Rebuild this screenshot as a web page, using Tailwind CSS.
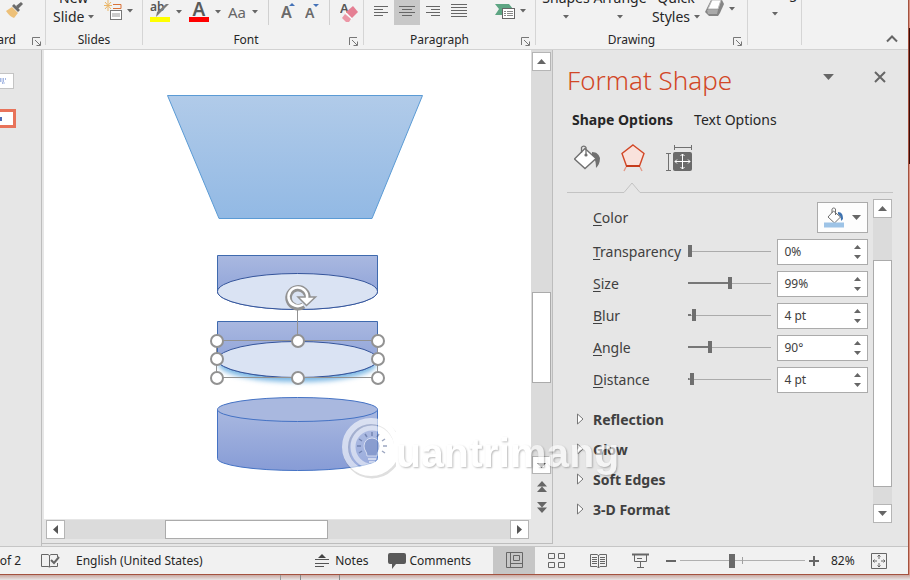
<!DOCTYPE html>
<html lang="en">
<head>
<meta charset="utf-8">
<title>Format Shape</title>
<script src="https://cdn.jsdelivr.net/npm/@tailwindcss/browser@4"></script>
</head>
<body class="font-['Noto_Sans',sans-serif] text-xs text-[#262626]">
<svg class="hidden" aria-hidden="true">
  <defs>
    <symbol id="down" viewBox="0 0 6 4"><path d="M0 0h6L3 3.5z" fill="#666"/></symbol>
    <symbol id="launch" viewBox="0 0 9 9"><path d="M.5 8V.5H8M3 3l5 5M8.500 4.500v4h-4" fill="none" stroke="#777"/></symbol>
    <symbol id="tri-up" viewBox="0 0 9 5"><path d="M0 5h9L4.500 0z" fill="#666"/></symbol>
    <symbol id="tri-down" viewBox="0 0 9 5"><path d="M0 0h9L4.500 5z" fill="#666"/></symbol>
    <symbol id="expand" viewBox="0 0 7 12"><path d="M.5 1v10L6 6z" fill="#fff" stroke="#777"/></symbol>
  </defs>
</svg>
<div class="relative flex h-screen flex-col overflow-hidden bg-[#e4e2e3]">
<div class="flex min-h-0 flex-1 bg-[linear-gradient(#d89080_0_28px,#3d0c08_28px_164px,#dd9484_164px)]">
<div class="flex min-w-0 flex-1 flex-col border-r border-b border-[#a4523f] bg-[#e6e6e6]">

  <!-- Ribbon -->
  <header class="flex h-[50px] shrink-0 border-b border-[#d2d2d2] bg-[#f2f2f2]">
    <section class="flex w-[46px] shrink-0 flex-col">
      <div class="flex h-[29px] overflow-hidden border-r border-[#d5d5d5] pl-1.5">
        <button aria-label="Format Painter" class="self-start"><svg width="18" height="19" viewBox="0 0 18 19"><path d="M0 11l6-4 6 6-4 5c-3-1-5-3-8-7z" fill="#edc078"/><path d="M6 6l2-2 6 6-2 2z" fill="#6b6b6b"/><path d="M10 6l5-4 2 2-5 5z" fill="#6b6b6b"/></svg></button>
      </div>
      <div class="flex h-4 items-center justify-between border-r border-[#d5d5d5] pr-1 pt-1.5"><span class="w-4 overflow-hidden"><span class="float-right">Clipboard</span></span><button aria-label="Clipboard settings" class="mt-0.5"><svg width="9" height="9"><use href="#launch"/></svg></button></div>
    </section>
    <section class="flex w-[97px] shrink-0 flex-col">
      <div class="flex h-[29px] items-end overflow-hidden border-r border-[#d5d5d5] pb-[3px] pl-[7px] text-sm leading-[19px]">
        <button class="w-[51px] text-left"><span class="block pl-1.5">New</span><span class="flex items-center gap-1">Slide <svg width="6" height="4"><use href="#down"/></svg></span></button>
        <button aria-label="Layout" class="flex items-center gap-1 self-start"><svg width="19" height="22" viewBox="0 0 19 22"><path d="M4 0v11M0 5.500h8M1 2l6 7M7 2l-6 7" stroke="#eab667" /><path d="M9 4.500h8v4H9" fill="none" stroke="#d9733a"/><rect x="6.500" y="10.500" width="11" height="9" fill="#fff" stroke="#777"/><path d="M8 13h8v4H8z" fill="#ccc"/></svg><svg width="6" height="4"><use href="#down"/></svg></button>
      </div>
      <div class="flex h-4 items-center justify-center border-r border-[#d5d5d5] pt-1.5">Slides</div>
    </section>
    <section class="flex w-[221px] shrink-0 flex-col">
      <div class="flex h-[29px] items-start overflow-hidden border-r border-[#d5d5d5] pl-[7px]">
        <button aria-label="Text Highlight Color" class="flex w-[39px] items-center gap-1.5"><svg width="20" height="24" viewBox="0 0 20 24"><text x="0" y="11" font-size="12" font-weight="600" fill="#555">ab</text><path d="M19 4l-9 9-4 4 1-5 9-8z" fill="#7b7b7b"/><path d="M0 17h20v5H0z" fill="#ff0"/></svg><svg width="6" height="4"><use href="#down"/></svg></button>
        <button aria-label="Font Color" class="flex w-[39px] items-center gap-1.5"><svg width="20" height="24" viewBox="0 0 20 24"><text x="10" y="16" text-anchor="middle" font-size="19" font-weight="600" fill="#5a5a5a">A</text><path d="M0 17h20v5H0z" fill="#f00"/></svg><svg width="6" height="4"><use href="#down"/></svg></button>
        <button class="flex h-6 w-10 items-center gap-1 text-[15px] text-[#666]">Aa <svg class="ml-0.5" width="6" height="4"><use href="#down"/></svg></button>
        <div class="mr-3 h-[25px] w-px bg-[#d0d0d0]"></div>
        <button aria-label="Increase Font Size" class="w-6"><svg width="16" height="22" viewBox="0 0 16 22"><text x="0" y="18" font-size="16" font-weight="600" fill="#6a6a6a">A</text><path d="M8 6h6l-3-3z" fill="#4472b8"/></svg></button>
        <button aria-label="Decrease Font Size" class="w-6"><svg width="16" height="22" viewBox="0 0 16 22"><text x="0" y="18" font-size="14" font-weight="600" fill="#6a6a6a">A</text><path d="M8 4h6l-3 3z" fill="#4472b8"/></svg></button>
        <div class="mr-2.5 h-[25px] w-px bg-[#d0d0d0]"></div>
        <button aria-label="Clear Formatting"><svg width="19" height="23" viewBox="0 0 19 23"><text x="0" y="13" font-size="13" font-weight="600" fill="#555">A</text><path d="M13 6l5 6-6 6-6-6z" fill="#e57f93"/><path d="M5 14l6 5-2 3H6l-4-4z" fill="#ec97a6"/><path d="M5 12l7 7" stroke="#fff"/></svg></button>
      </div>
      <div class="flex h-4 items-center border-r border-[#d5d5d5] pr-[5px] pt-1.5"><span class="flex-1 text-center">Font</span><button aria-label="Font settings" class="mt-0.5"><svg width="9" height="9"><use href="#launch"/></svg></button></div>
    </section>
    <section class="flex w-[172px] shrink-0 flex-col">
      <div class="flex h-[29px] items-start overflow-hidden border-r border-[#d5d5d5] pl-1">
        <button aria-label="Align Left" class="flex w-[26px] justify-center"><svg width="16" height="25"><path d="M1 6.500h14M1 9.500h9M1 12.500h14M1 15.500h9" stroke="#666"/></svg></button>
        <button aria-label="Center" class="flex w-[26px] justify-center bg-[#c8c8c8]"><svg width="16" height="25"><path d="M0 6.500h16M3 9.500h10M0 12.500h16M3 15.500h10" stroke="#666"/></svg></button>
        <button aria-label="Align Right" class="flex w-[26px] justify-center"><svg width="16" height="25"><path d="M1 6.500h14M6 9.500h9M1 12.500h14M6 15.500h9" stroke="#666"/></svg></button>
        <button aria-label="Justify" class="flex w-[26px] justify-center"><svg width="16" height="25"><path d="M0 4.500h16M0 7.500h16M0 10.500h16M0 13.500h16M0 16.500h16" stroke="#666"/></svg></button>
        <button aria-label="Convert to SmartArt" class="ml-[23px] flex items-center gap-1"><svg width="21" height="22" viewBox="0 0 21 22"><path d="M0 4h14l4 5h-11v6H0l4-6z" fill="#5da583"/><rect x="7.500" y="8.500" width="12" height="10" fill="#fff" stroke="#666"/><path d="M9 11.500h2M12 11.500h6M9 13.500h2M12 13.500h6M9 15.500h2M12 15.500h6" stroke="#888"/></svg><svg width="6" height="4"><use href="#down"/></svg></button>
      </div>
      <div class="flex h-4 items-center border-r border-[#d5d5d5] pr-[5px] pt-1.5"><span class="flex-1 pr-1.5 text-center">Paragraph</span><button aria-label="Paragraph settings" class="mt-0.5"><svg width="9" height="9"><use href="#launch"/></svg></button></div>
    </section>
    <section class="flex w-[212px] shrink-0 flex-col">
      <div class="flex h-[29px] items-end overflow-hidden border-r border-[#d5d5d5] pb-[3px] pl-1 text-sm leading-[19px]">
        <button class="flex w-[52px] flex-col items-center"><span>Shapes</span><span class="flex h-[19px] items-center"><svg width="6" height="4"><use href="#down"/></svg></span></button>
        <button class="flex w-[56px] flex-col items-center"><span>Arrange</span><span class="flex h-[19px] items-center"><svg width="6" height="4"><use href="#down"/></svg></span></button>
        <button class="ml-[3px] flex w-[50px] flex-col items-center"><span>Quick</span><span class="flex items-center gap-1">Styles <svg width="6" height="4"><use href="#down"/></svg></span></button>
        <button aria-label="Shape Effects" class="ml-1 flex items-center gap-1 self-start"><svg width="20" height="17" viewBox="0 0 20 17"><path d="M6 0h11l2 4-4 9-2 3H4l-4-4z" fill="#858585"/><path d="M7 0h9l-3 9H3z" fill="#fff" stroke="#bbb"/><path d="M2 10h11l-1 4H3z" fill="#aaa"/></svg><svg width="6" height="4"><use href="#down"/></svg></button>
      </div>
      <div class="flex h-4 items-center border-r border-[#d5d5d5] pr-[5px] pt-1.5"><span class="flex-1 pr-1.5 text-center">Drawing</span><button aria-label="Drawing settings" class="mt-0.5"><svg width="9" height="9"><use href="#launch"/></svg></button></div>
    </section>
    <section class="flex w-[54px] shrink-0 flex-col">
      <div class="flex h-[29px] items-end justify-center overflow-hidden border-r border-[#d5d5d5] pb-[3px] text-sm leading-[19px]">
        <button class="flex flex-col items-center"><span>Editing</span><span class="flex h-6 items-start pt-2.5"><svg width="6" height="4"><use href="#down"/></svg></span></button>
      </div>
      <div class="h-4 border-r border-[#d5d5d5]"></div>
    </section>
    <div class="flex flex-1 items-end justify-end pr-2.5 pb-1.5"><button aria-label="Collapse the Ribbon"><svg width="12" height="9" viewBox="0 0 12 9"><path d="M1 7.500l5-5 5 5" fill="none" stroke="#666" stroke-width="2"/></svg></button></div>
  </header>

  <main class="flex min-h-0 flex-1">
    <!-- Slide thumbnails -->
    <nav class="flex w-[42px] shrink-0 flex-col items-start gap-5 border-r border-[#bdbdbd] pt-[23px]" aria-label="Slides">
      <button aria-label="Slide 1" class="h-4 w-3.5 border border-l-0 border-[#c4c4c4] bg-white"><svg width="9" height="10"><path d="M0 3h6M0 5h4M2 7h3" stroke="#8ba2da" stroke-width="1.500" stroke-dasharray="1.500 1"/></svg></button>
      <button aria-label="Slide 2" class="h-[19px] w-4 border-3 border-l-0 border-[#e8735a] bg-white"><svg width="4" height="8"><path d="M0 2h2v4H0z" fill="#4d6bb5"/></svg></button>
    </nav>

    <div class="mb-0.5 flex min-w-0 flex-1 flex-col border-r border-b border-[#bdbdbd] pl-0.5">
      <div class="flex min-h-0 flex-1">
        <!-- Slide canvas -->
        <div class="relative min-w-0 flex-1 bg-white">
          <svg class="block h-full w-full" viewBox="44 50 487 469" role="img" aria-label="Slide with a trapezoid and three cylinders">
            <defs>
              <linearGradient id="g1" x2="0" y2="1"><stop stop-color="#b1cbe9"/><stop offset="1" stop-color="#92b9e4"/></linearGradient>
              <linearGradient id="g2" x2="0" y2="1"><stop stop-color="#a9b8e0"/><stop offset="1" stop-color="#879cd6"/></linearGradient>
              <filter id="soft" x="-20%" y="-50%" width="140%" height="200%"><feGaussianBlur stdDeviation="2.500"/></filter>
            </defs>
            <path d="M167.500 95.500h255l-50.500 123h-153z" fill="url(#g1)" stroke="#5b9bd5"/>
            <path d="M217.500 255.500h160v36a80 18 0 0 1-160 0z" fill="url(#g2)" stroke="#3f6aae"/>
            <ellipse cx="297.500" cy="291.500" rx="80" ry="18" fill="#dae3f3" stroke="#34549b"/>
            <ellipse cx="297.500" cy="364" rx="79" ry="18" fill="#7db8e4" filter="url(#soft)"/>
            <path d="M217.500 321.500h160v38a80 18 0 0 1-160 0z" fill="url(#g2)" stroke="#3f6aae"/>
            <ellipse cx="297.500" cy="359.500" rx="80" ry="18" fill="#dae3f3" stroke="#34549b"/>
            <path d="M217.500 409.500v49a80 12 0 0 0 160 0v-49" fill="url(#g2)" stroke="#4472c4"/>
            <ellipse cx="297.500" cy="409.500" rx="80" ry="12" fill="#a9b8df" stroke="#4472c4"/>
            <path d="M297.500 310v30M216.500 340.500h161v37h-161z" fill="none" stroke="#929292"/>
            <g fill="#fff" stroke="#929292" stroke-width="2"><circle cx="217" cy="341" r="6"/><circle cx="298" cy="341" r="6"/><circle cx="378" cy="341" r="6"/><circle cx="217" cy="359" r="6"/><circle cx="378" cy="359" r="6"/><circle cx="217" cy="378" r="6"/><circle cx="298" cy="378" r="6"/><circle cx="378" cy="378" r="6"/></g>
            <path d="M303.500 305.500a9.500 9.500 0 1 1 4-7" fill="none" stroke="#929292" stroke-width="6.500"/>
            <path d="M298 297h17.500l-9 8.500z" fill="#fff" stroke="#929292" stroke-width="1.500"/>
            <path d="M303 304.500a9.300 9.300 0 1 1 4-6" fill="none" stroke="#fff" stroke-width="2.600"/>
            <path d="M302 298.500h9.500l-5 4.500z" fill="#fff"/>
          </svg>
        </div>
        <!-- Vertical scrollbar -->
        <div class="flex w-[21px] shrink-0 flex-col items-center bg-[#dbdbdb] pt-0.5">
          <button aria-label="Scroll up" class="flex h-[19px] w-[19px] items-center justify-center border border-[#b5b5b5] bg-white"><svg width="9" height="5"><use href="#tri-up"/></svg></button>
          <div class="flex w-[19px] flex-1 flex-col pt-[221px]"><div class="h-[91px] border border-[#ababab] bg-white"></div></div>
          <button aria-label="Scroll down" class="flex h-[18px] w-[19px] items-center justify-center border border-[#b5b5b5] bg-white"><svg width="9" height="5"><use href="#tri-down"/></svg></button>
          <div class="flex h-[45px] w-full flex-col items-center gap-2.5 bg-[#e6e6e6] pt-[7px]">
            <button aria-label="Previous Slide"><svg class="block" width="10" height="11"><path d="M0 5.500h10L5 0zM0 11h10L5 5.500z" fill="#666"/></svg></button>
            <button aria-label="Next Slide"><svg class="block" width="10" height="11"><path d="M0 0h10L5 5.500zM0 5.500h10L5 11z" fill="#666"/></svg></button>
          </div>
        </div>
      </div>
      <!-- Horizontal scrollbar -->
      <div class="flex h-6 shrink-0 items-start pt-px pr-[23px] pl-0.5">
        <button aria-label="Scroll left" class="flex h-[19px] w-[19px] items-center justify-center border border-[#b5b5b5] bg-white"><svg width="5" height="9"><path d="M5 0v9L0 4.500z" fill="#555"/></svg></button>
        <div class="flex h-[19px] flex-1 bg-[#dbdbdb] pl-[100px]"><div class="w-[163px] border border-[#ababab] bg-white"></div></div>
        <button aria-label="Scroll right" class="flex h-[19px] w-[19px] items-center justify-center border border-[#b5b5b5] bg-white"><svg width="5" height="9"><path d="M0 0v9l5-4.500z" fill="#555"/></svg></button>
      </div>
    </div>

    <!-- Format Shape pane -->
    <aside class="flex w-[355px] shrink-0 flex-col pt-2.5 pl-3.5">
      <div class="flex h-10 items-center">
        <h1 class="flex-1 text-[26px] leading-10 font-light text-[#d24726]">Format Shape</h1>
        <button aria-label="Task Pane Options" class="mr-10 mb-1.5"><svg width="11" height="6" viewBox="0 0 9 5"><use href="#tri-down"/></svg></button>
        <button aria-label="Close" class="mr-[22px] mb-1.5"><svg width="12" height="12" viewBox="0 0 12 12"><path d="M1 1l10 10M11 1L1 11" stroke="#666" stroke-width="2"/></svg></button>
      </div>
      <div class="mt-2 flex h-6 items-center gap-[21px] pl-[5px] text-sm">
        <button class="font-bold">Shape Options</button><button>Text Options</button>
      </div>
      <div class="mt-3 flex h-8 items-start gap-5 pl-[7px]">
        <button aria-label="Fill &amp; Line"><svg width="27" height="27" viewBox="0 0 27 27"><path d="M18 8c5 0 7 3 8 6 0 5-2 8-4 10 0-6-1-10-4-13z" fill="#707070"/><path d="M11 4.500l11 10-11 10-10.500-9.500z" fill="#fff" stroke="#707070" stroke-width="1.400"/><path d="M7.500 9V3.500a2.500 2.500 0 0 1 4.500 0V11" fill="none" stroke="#707070" stroke-width="1.300"/><circle cx="12" cy="11" r="1.600" fill="#707070"/></svg></button>
        <button aria-label="Effects"><svg width="24" height="28" viewBox="0 0 24 28"><path d="M12 1l11 8.500-4.500 12.500h-13L1 9.500z" fill="#f9e2dc" stroke="#d24726" stroke-width="1.400"/><path d="M5 22h14" stroke="#c63c1c" stroke-width="2"/><path d="M5 23l-2 4M19 23l2 4" stroke="#e39a88" stroke-width="1.400"/></svg></button>
        <button aria-label="Size &amp; Properties"><svg width="28" height="28" viewBox="0 0 28 28"><rect x="8" y="8" width="19" height="19" rx="2" fill="#6a6a6a"/><path d="M9.500 1v5M26.500 1v5M9.500 3.500h17M1 9.500h5M1 26.500h5M3.500 9.500v17" stroke="#707070" fill="none"/><path d="M17.500 10v15M10 17.500h15M15.500 12l2-2 2 2M15.500 23l2 2 2-2M12 15.500l-2 2 2 2M23 15.500l2 2-2 2" fill="none" stroke="#fff"/></svg></button>
      </div>
      <svg class="mt-1.5 block h-3 w-full" aria-hidden="true"><path d="M0 10.500h57l8-9.500 8 9.500h253" fill="none" stroke="#c3c3c3"/></svg>

      <div class="mt-[5px] flex">
        <form class="min-w-0 flex-1 pt-[3px] pr-[5px] text-[#404040]">
          <div class="mb-1.5 flex h-[31px] items-center justify-between pl-[26px] text-sm">
            <span id="color-label"><u class="underline-offset-2">C</u>olor</span>
            <button type="button" aria-labelledby="color-label" class="flex h-[31px] w-[51px] items-center justify-center gap-[7px] border border-[#ababab] bg-[#fdfdfd]"><svg width="21" height="21" viewBox="0 0 21 21"><path d="M14 5c4 0 5 3 5 7l-2 2c0-4-1-5-3-7z" fill="#3d72b0"/><path d="M9.500 4l7 6-6 6-6.500-6z" fill="#fff" stroke="#707070"/><path d="M8 6V2a2 2 0 0 1 3.500 0v6" fill="none" stroke="#707070"/><path d="M0 15.500h20v5H0z" fill="#9dc3e6"/></svg><svg width="9" height="5"><use href="#tri-down"/></svg></button>
          </div>
          <div id="rows" class="flex flex-col gap-1.5"></div>
          <div class="mt-3 flex flex-col pl-2.5 text-sm font-bold">
            <button type="button" class="flex h-[30px] items-center gap-[9px]"><svg class="mb-0.5" width="7" height="12"><use href="#expand"/></svg>Reflection</button>
            <button type="button" class="flex h-[30px] items-center gap-[9px]"><svg class="mb-0.5" width="7" height="12"><use href="#expand"/></svg>Glow</button>
            <button type="button" class="flex h-[30px] items-center gap-[9px]"><svg class="mb-0.5" width="7" height="12"><use href="#expand"/></svg>Soft Edges</button>
            <button type="button" class="flex h-[30px] items-center gap-[9px]"><svg class="mb-0.5" width="7" height="12"><use href="#expand"/></svg>3-D Format</button>
          </div>
        </form>
        <div class="mr-4 mb-0.5 flex w-[19px] shrink-0 flex-col bg-[#dbdbdb]">
          <button aria-label="Scroll pane up" class="flex h-[19px] items-center justify-center border border-[#b5b5b5] bg-white"><svg width="9" height="5"><use href="#tri-up"/></svg></button>
          <div class="mt-[42px] mb-[17px] flex-1 border border-[#ababab] bg-white"></div>
          <button aria-label="Scroll pane down" class="flex h-[19px] items-center justify-center border border-[#b5b5b5] bg-white"><svg width="9" height="5"><use href="#tri-down"/></svg></button>
        </div>
      </div>
    </aside>
  </main>

  <!-- Status bar -->
  <footer class="flex h-7 shrink-0 items-center border-t border-[#c6c6c6] bg-[#f1f1f1]">
    <span class="w-[41px] overflow-hidden"><span class="block w-[21px]"><span class="float-right whitespace-nowrap">Slide 2 of 2</span></span></span>
    <button aria-label="Spelling"><svg width="19" height="16" viewBox="0 0 19 16"><path d="M8.500 14V2.500L7 1.500H.5v12H7zM8.500 14l1.500-.5h6.500V10M8.500 2.500l1.500-1h6.500V4" fill="none" stroke="#666"/><path d="M10 7l3 3 5-6" fill="none" stroke="#666" stroke-width="2"/></svg></button>
    <button class="ml-4 flex-1 text-left">English (United States)</button>
    <button class="mr-5 flex items-center gap-1.5"><svg width="14" height="14"><path d="M3 4h8L7 0z" fill="#444"/><path d="M0 5.500h14M0 9.500h14M0 12.500h9" stroke="#555"/></svg>Notes</button>
    <button class="mr-[22px] flex items-center gap-[3px]"><svg width="18" height="16"><path d="M2 0h14q2 0 2 2v7q0 2-2 2H8l-4 5v-5H2Q0 11 0 9V2Q0 0 2 0z" fill="#595959"/></svg>Comments</button>
    <button aria-label="Normal" class="flex h-full w-[42px] items-center justify-center bg-[#c6c6c6]"><svg width="17" height="17"><path d="M.5.500h16v15H.5zM4.500.500v15M4.500 11.500h12M7.500 3.500h6v5h-6z" fill="none" stroke="#666"/></svg></button>
    <button aria-label="Slide Sorter" class="flex w-[42px] justify-center"><svg width="17" height="17"><path d="M.5 1.500h6v5h-6zM10.500 1.500h6v5h-6zM.5 10.500h6v5h-6zM10.500 10.500h6v5h-6z" fill="none" stroke="#666"/></svg></button>
    <button aria-label="Reading View" class="flex w-[42px] justify-center"><svg width="17" height="16"><path d="M.5 1.500H7l1.500 1 1.500-1h6.500v12H10l-1.500 1.500L7 13.500H.5zM8.500 2v13M2 4.500h5M2 6.500h5M2 8.500h5M2 10.500h5M10 4.500h5M10 6.500h5M10 8.500h5M10 10.500h5" fill="none" stroke="#666"/></svg></button>
    <button aria-label="Slide Show" class="flex w-[42px] justify-center"><svg width="17" height="16"><path d="M0 1.500h17" stroke="#666" stroke-width="2"/><path d="M2.500 2v6.500h12V2M5 5.500h5M8.500 9v5M5 14.500h7" fill="none" stroke="#666"/></svg></button>
    <button aria-label="Zoom Out" class="ml-[5px]"><svg width="10" height="10"><path d="M0 5h10" stroke="#666" stroke-width="2"/></svg></button>
    <label class="mx-1 flex"><span class="sr-only">Zoom</span><input type="range" min="0" max="100" value="41" aria-valuetext="82%" class="h-3.5 w-[125px] appearance-none bg-[linear-gradient(#a0a0a0,#a0a0a0),linear-gradient(#b0b0b0,#b0b0b0)] bg-[length:1px_7px,100%_1px] bg-center bg-no-repeat [&::-webkit-slider-thumb]:h-3.5 [&::-webkit-slider-thumb]:w-1.5 [&::-webkit-slider-thumb]:appearance-none [&::-webkit-slider-thumb]:bg-[#6a6a6a]"></label>
    <button aria-label="Zoom In"><svg width="10" height="10"><path d="M0 5h10M5 0v10" stroke="#666" stroke-width="2"/></svg></button>
    <button class="ml-3 w-10 text-left">82%</button>
    <button aria-label="Fit slide to window" class="mr-[21px]"><svg width="16" height="16"><path d="M.5.500h15v15H.5zM8 2v4M8 10v4M2 8h4M10 8h4M6.500 3.500L8 2l1.500 1.500M6.500 12.500L8 14l1.500-1.500M3.500 6.500L2 8l1.500 1.500M12.500 6.500L14 8l-1.500 1.500" fill="none" stroke="#666"/></svg></button>
  </footer>
</div>
<div class="w-px shrink-0"></div>
</div>
<!-- Window behind -->
<div class="flex h-[5px] shrink-0 bg-linear-to-b from-[#c9a9a2] to-[#e8e6e7] pl-[280px]"><div class="w-5 border-l border-[#999]"></div><div class="w-10 border-x border-[#888]"></div></div>

<!-- Watermark -->
<div class="pointer-events-none absolute top-[413px] left-[341px] flex opacity-60">
  <svg width="55" height="68" viewBox="0 0 55 68"><circle cx="31" cy="36" r="26" fill="none" stroke="#777" stroke-opacity=".4" stroke-width="7"/><circle cx="30" cy="34" r="26" fill="#fff" fill-opacity=".25" stroke="#fff" stroke-width="6"/><circle cx="31" cy="34" r="19" fill="none" stroke="#fff" stroke-width="5"/><path d="M26 43c0-5-3-5-3-10a8 8 0 0 1 16 0c0 5-3 5-3 10z" fill="#8296c8" stroke="#fff"/><path d="M27 46h8M28 49h6" stroke="#fff" stroke-width="2"/><path d="M31 19v4M24 21l2 3M38 21l-2 3M18 26l3 2M44 26l-3 2M16 33h4M46 33h-4M18 40l3-2M44 40l-3-2" stroke="#5a6b96" stroke-width="1.500"/></svg>
  <span class="pt-[16px] font-['Liberation_Sans',sans-serif] text-[41px] leading-[48px] font-bold text-white [text-shadow:1px_1px_2px_rgba(0,0,0,0.45)]">uantrimang</span>
</div>
</div>
<template id="row">
  <div class="flex h-[26px] items-center pl-[26px]">
    <label class="w-24 text-sm"></label>
    <input type="range" class="mr-1.5 mb-0.5 h-3 w-[83px] appearance-none bg-[linear-gradient(#777,#777),linear-gradient(#ababab,#ababab)] bg-[length:var(--fill)_2px,100%_1px] bg-left bg-no-repeat [&::-webkit-slider-thumb]:h-3 [&::-webkit-slider-thumb]:w-1 [&::-webkit-slider-thumb]:appearance-none [&::-webkit-slider-thumb]:bg-[#6f6f6f]">
    <div class="flex h-full w-[91px] items-center border border-[#ababab] bg-white pr-1.5 pl-1.5">
      <input type="text" class="w-0 flex-1 bg-transparent text-xs outline-none">
      <div class="flex flex-col gap-1.5"><button type="button"><svg class="block" width="7" height="4" viewBox="0 0 9 5"><use href="#tri-up"/></svg></button><button type="button"><svg class="block" width="7" height="4" viewBox="0 0 9 5"><use href="#tri-down"/></svg></button></div>
    </div>
  </div>
</template>
<script>
const settings = [
  ['Transparency', '0%', 0, 100],
  ['Size', '99%', 99, 200],
  ['Blur', '4 pt', 4, 100],
  ['Angle', '90°', 90, 359],
  ['Distance', '4 pt', 4, 200]
];
const rows = document.getElementById('rows');
for (const [name, text, value, max] of settings) {
  const row = document.getElementById('row').content.cloneNode(true);
  const label = row.querySelector('label');
  const [range, field] = row.querySelectorAll('input');
  const [up, down] = row.querySelectorAll('button');
  label.innerHTML = '<u class="underline-offset-2">' + name[0] + '</u>' + name.slice(1);
  label.htmlFor = field.id = name.toLowerCase();
  range.setAttribute('aria-label', name);
  range.max = max;
  range.value = value;
  range.style.setProperty('--fill', (value / max * 100) + '%');
  field.value = text;
  up.setAttribute('aria-label', 'Increase ' + name);
  down.setAttribute('aria-label', 'Decrease ' + name);
  rows.append(row);
}
</script>
</body>
</html>
